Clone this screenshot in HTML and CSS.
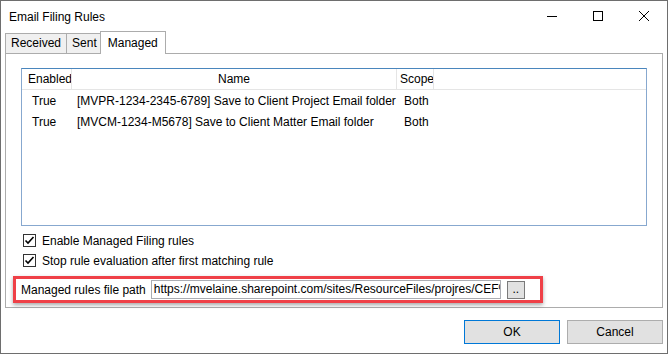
FILE: index.html
```html
<!DOCTYPE html>
<html lang="en">
<head>
    <meta charset="UTF-8">
    <title>Email Filing Rules</title>
    <link rel="stylesheet" href="styles.css">
</head>
<body>
    <div class="window">
        <div class="titlebar">
            <div class="title">Email Filing Rules</div>
            <div class="caption-buttons">
                <div class="caption-btn">
                    <svg width="10" height="10" viewBox="0 0 10 10"><path d="M0 5.5h10" stroke="#000" stroke-width="1"/></svg>
                </div>
                <div class="caption-btn">
                    <svg width="10" height="10" viewBox="0 0 10 10"><rect x="0.5" y="0.5" width="9" height="9" fill="none" stroke="#000" stroke-width="1"/></svg>
                </div>
                <div class="caption-btn">
                    <svg width="10" height="10" viewBox="0 0 10 10"><path d="M0 0L10 10M10 0L0 10" stroke="#000" stroke-width="1"/></svg>
                </div>
            </div>
        </div>

        <div class="tabs">
            <div class="tab">Received</div>
            <div class="tab">Sent</div>
            <div class="tab active">Managed</div>
        </div>

        <div class="panel">
            <div class="listview">
                <div class="lv-row lv-header">
                    <div class="col col-enabled">Enabled</div>
                    <div class="col col-name">Name</div>
                    <div class="col col-scope">Scope</div>
                </div>
                <div class="lv-row">
                    <div class="col col-enabled">True</div>
                    <div class="col col-name">[MVPR-1234-2345-6789] Save to Client Project Email folder</div>
                    <div class="col col-scope">Both</div>
                </div>
                <div class="lv-row">
                    <div class="col col-enabled">True</div>
                    <div class="col col-name">[MVCM-1234-M5678] Save to Client Matter Email folder</div>
                    <div class="col col-scope">Both</div>
                </div>
            </div>

            <div class="options">
                <label class="check">
                    <svg class="checkbox" width="13" height="13" viewBox="0 0 13 13"><rect x="0.5" y="0.5" width="12" height="12" fill="#fff" stroke="#333"/><path d="M2.5 6.5L5 9L10.5 3" fill="none" stroke="#000" stroke-width="1.6"/></svg>
                    Enable Managed Filing rules
                </label>
                <label class="check">
                    <svg class="checkbox" width="13" height="13" viewBox="0 0 13 13"><rect x="0.5" y="0.5" width="12" height="12" fill="#fff" stroke="#333"/><path d="M2.5 6.5L5 9L10.5 3" fill="none" stroke="#000" stroke-width="1.6"/></svg>
                    Stop rule evaluation after first matching rule
                </label>
            </div>

            <div class="path-row">
                <span class="path-label">Managed rules file path</span>
                <div class="path-input">https://mvelaine.sharepoint.com/sites/ResourceFiles/projres/CEF%</div>
                <div class="browse-btn">..</div>
            </div>
        </div>

        <div class="footer">
            <div class="btn btn-default">OK</div>
            <div class="btn">Cancel</div>
        </div>
    </div>
</body>
</html>
```

FILE: styles.css
```css
* {
    margin: 0;
    padding: 0;
    box-sizing: border-box;
    font-family: "Liberation Sans", Arial, sans-serif;
}

body {
    background: #fff;
    color: #000;
    font-size: 12px;
}

.window {
    width: 668px;
    height: 354px;
    border: 1px solid #6e6e6e;
    background: #fff;
    display: flex;
    flex-direction: column;
}

.titlebar {
    height: 29px;
    display: flex;
    align-items: center;
    justify-content: space-between;
    padding-left: 8px;
}

.title {
    font-size: 12px;
    margin-top: 2px;
}

.caption-buttons {
    display: flex;
    align-self: stretch;
}

.caption-btn {
    width: 46px;
    display: flex;
    align-items: center;
    justify-content: center;
}

.tabs {
    display: flex;
    align-items: flex-end;
    padding-left: 4px;
    height: 23px;
}

.tab {
    height: 20px;
    padding: 0 5px;
    line-height: 19px;
    background: #f0f0f0;
    border: 1px solid #acacac;
    border-bottom: none;
    margin-right: -1px;
}

.tab.active {
    height: 23px;
    padding: 0 7px;
    line-height: 22px;
    background: #fff;
    position: relative;
    top: 1px;
    z-index: 1;
    margin-left: -2px;
}

.panel {
    margin: 0 4px;
    height: 255px;
    border: 1px solid #acacac;
    padding: 14px 15px 0 15px;
    display: flex;
    flex-direction: column;
}

.listview {
    height: 158px;
    border: 1px solid #87a8cf;
    border-top-color: #4a86bd;
}

.lv-row {
    display: flex;
    height: 21px;
    align-items: center;
}

.lv-header {
    height: 21px;
    border-bottom: 1px solid #e5e5e5;
}

.col {
    white-space: nowrap;
    overflow: hidden;
}

.col-enabled {
    width: 50px;
    padding-left: 10px;
}

.col-name {
    width: 325px;
    padding-left: 5px;
}

.col-scope {
    width: 37px;
    padding-left: 7px;
}

.lv-header .col {
    height: 100%;
    line-height: 20px;
    border-right: 1px solid #e5e5e5;
}

.lv-header .col-enabled {
    padding-left: 6px;
}

.lv-header .col-name {
    text-align: center;
    padding-left: 0;
}

.lv-header .col-scope {
    padding-left: 3px;
}

.options {
    display: flex;
    flex-direction: column;
    gap: 7px;
    margin-top: 8px;
}

.check {
    display: flex;
    align-items: center;
    gap: 6px;
    padding-left: 2px;
    height: 13px;
}

.path-row {
    display: flex;
    align-items: center;
    margin: 9px 0 0 -8px;
    width: 530px;
    height: 27px;
    border: 3px solid #ef4047;
    padding-left: 5px;
    box-shadow: 0 2px 4px rgba(0, 0, 0, 0.35);
}

.path-label {
    white-space: nowrap;
    margin-right: 5px;
}

.path-input {
    width: 350px;
    height: 19px;
    border: 1px solid #abadb3;
    padding: 0 2px;
    line-height: 17px;
    white-space: nowrap;
    overflow: hidden;
}

.browse-btn {
    width: 18px;
    height: 18px;
    margin-left: 6px;
    background: #e1e1e1;
    border: 1px solid #7a7a7a;
    text-align: center;
    line-height: 14px;
}

.footer {
    display: flex;
    justify-content: flex-end;
    gap: 7px;
    padding: 12px 4px 0 0;
}

.btn {
    width: 96px;
    height: 24px;
    background: #e1e1e1;
    border: 1px solid #adadad;
    display: flex;
    align-items: center;
    justify-content: center;
}

.btn-default {
    border: 1px solid #0078d7;
}
```
